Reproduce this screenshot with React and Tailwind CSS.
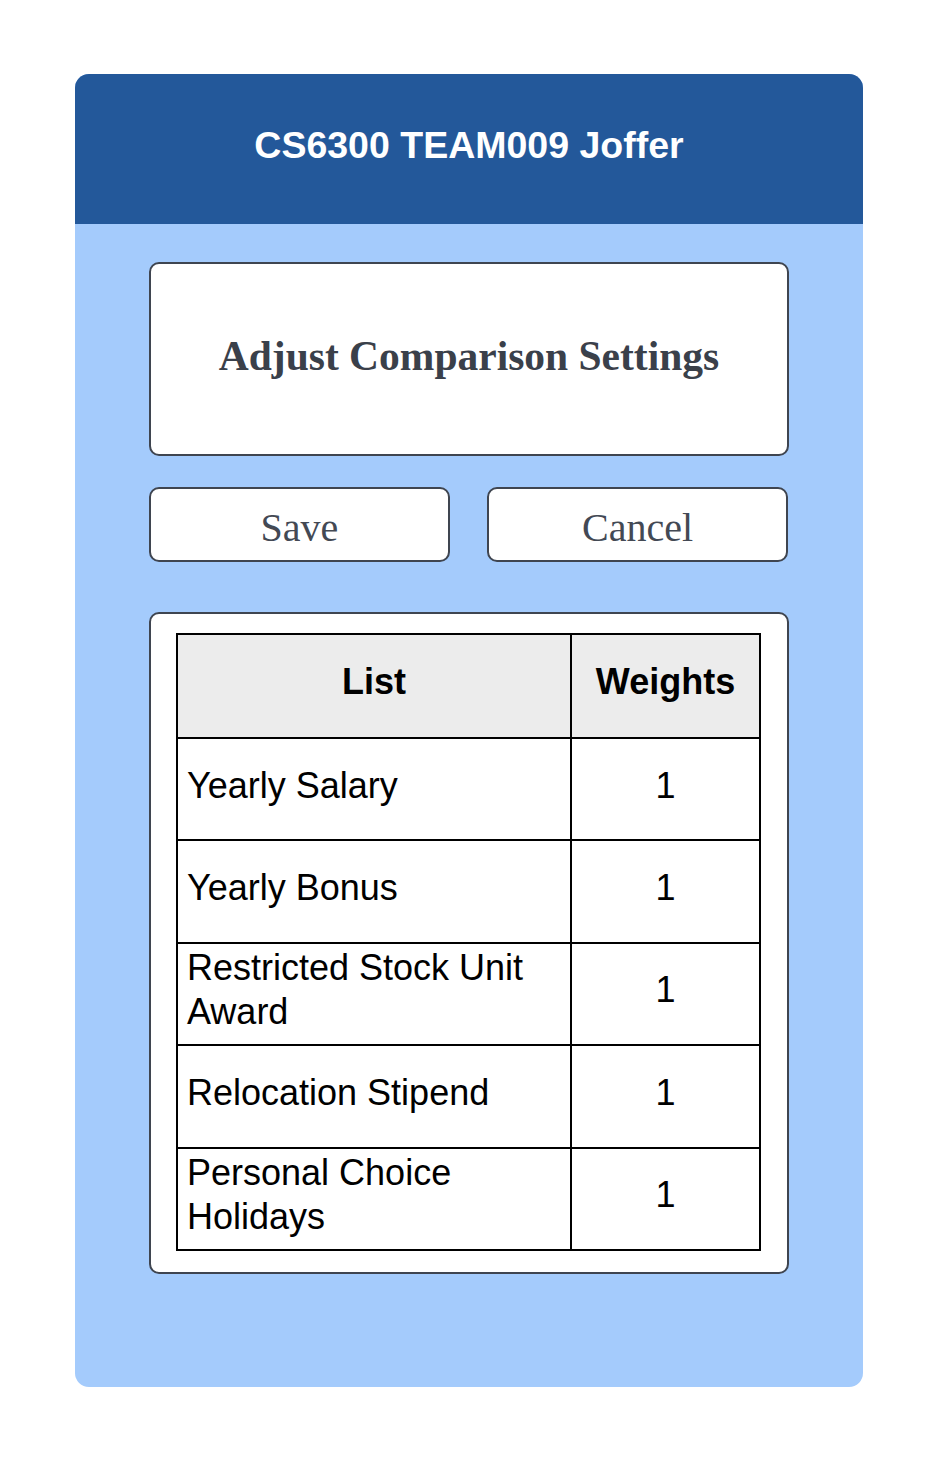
import React from "react";

const rows = [
  "Yearly Salary",
  "Yearly Bonus",
  "Restricted Stock Unit Award",
  "Relocation Stipend",
  "Personal Choice Holidays",
];

export default function App() {
  return (
    <div className="min-h-[1463px] w-[939px] bg-white pl-[75px] pt-[74px]">
      <div className="flex h-[1313px] w-[788px] flex-col overflow-hidden rounded-[14px] bg-[#a4cbfc]">
        <div className="flex h-[150px] items-center justify-center bg-[#23589a] pb-[8px]">
          <h1 className="font-['Liberation_Sans',Arial,sans-serif] text-[37.5px] font-bold text-white">
            CS6300 TEAM009 Joffer
          </h1>
        </div>

        <div className="px-[74px] pt-[38px]">
          <div className="flex h-[194px] items-center justify-center rounded-[10px] border-2 border-[#3f4550] bg-white pb-[6px]">
            <h2 className="font-['Liberation_Serif','Times_New_Roman',serif] text-[41.5px] font-bold text-[#3a404a]">
              Adjust Comparison Settings
            </h2>
          </div>

          <div className="mt-[31px] flex gap-[37px]">
            <button className="flex h-[75px] w-[301px] items-center justify-center rounded-[10px] border-2 border-[#3f4550] bg-white pt-[7px] font-['Liberation_Serif','Times_New_Roman',serif] text-[40px] text-[#434954]">
              Save
            </button>
            <button className="flex h-[75px] w-[301px] items-center justify-center rounded-[10px] border-2 border-[#3f4550] bg-white pt-[7px] font-['Liberation_Serif','Times_New_Roman',serif] text-[40px] text-[#434954]">
              Cancel
            </button>
          </div>

          <div className="mt-[50px] h-[662px] rounded-[10px] border-2 border-[#3f4550] bg-white pl-[25px] pt-[19px]">
            <table className="w-[585px] border-collapse font-['Liberation_Sans',Arial,sans-serif] text-[36px] leading-[44px] text-black">
              <thead>
                <tr className="h-[104px] bg-[#ececec]">
                  <th className="w-[394px] border-2 border-black pb-[8px] font-bold">List</th>
                  <th className="border-2 border-black pb-[8px] font-bold">Weights</th>
                </tr>
              </thead>
              <tbody>
                {rows.map((label) => (
                  <tr key={label} className="h-[102.4px]">
                    <td className="border-2 border-black px-[9px] pb-[7px] text-left">{label}</td>
                    <td className="border-2 border-black pb-[7px] text-center">1</td>
                  </tr>
                ))}
              </tbody>
            </table>
          </div>
        </div>
      </div>
    </div>
  );
}
